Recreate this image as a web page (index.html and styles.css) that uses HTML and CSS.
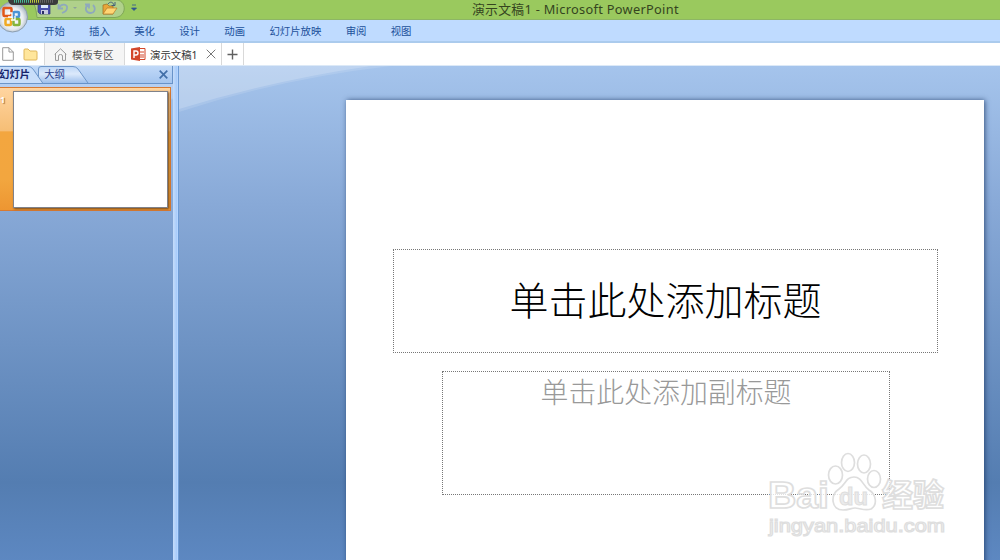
FILE: index.html
```html
<!DOCTYPE html>
<html lang="zh-CN">
<head>
  <meta charset="UTF-8" />
  <meta name="viewport" content="width=device-width, initial-scale=1.0" />
  <title>演示文稿1 - Microsoft PowerPoint</title>
  <link rel="stylesheet" href="styles.css">
</head>
<body>

  <!-- Title bar -->
  <header class="title-bar">
    <div class="quick-access">
      <svg class="quick-icons" width="100" height="19" viewBox="0 0 100 19">
        <path d="M0 0H85C95 1 95 17 83 17.500H5Q4 6 0 0Z" fill="#b0d18b" stroke="#7fa757" />
        <!-- save -->
        <path d="M6 2H18V14H8L6 12Z" fill="#4950ac" stroke="#353985" stroke-width=".7" />
        <path d="M9 3H16V8H9Z" fill="#dce8fa" />
        <path d="M9 10H16V14H9Z" fill="#c9cce0" />
        <path d="M10 11H12V14H10Z" fill="#292d65" />
        <!-- undo / redo -->
        <path d="M26.500 4V8.500H31M27 8C29 3 36 4 35 8C35 10 33 12 30 13" fill="none" stroke="#8fa9bc" stroke-width="1.8" />
        <path d="M41 7H45L43 9Z" fill="#8da19b" />
        <path d="M56 5C52 8 54 13 58.500 13C63 13 64 8 61 5M53 4.500H57V8.500" fill="none" stroke="#8fa9bc" stroke-width="1.8" />
        <!-- open -->
        <path d="M71 5L75 4L77 6H81V14H71Z" fill="#e8a63a" stroke="#9d6c21" stroke-width=".7" />
        <path d="M71 14L75 8H85L81 14Z" fill="#ffd574" stroke="#b47a25" stroke-width=".7" />
        <path d="M76 4C78 1 81 2 82 5M83 2V5.500H79.500" fill="none" stroke="#44607a" />
      </svg>
      <svg class="quick-more" width="6" height="8" viewBox="0 0 6 8"><path d="M1 1H5M.5 4H5.5L3 6.500Z" fill="#305790" stroke="#305790" stroke-width=".8" /></svg>
    </div>
    <h1 class="window-title">演示文稿1 - Microsoft PowerPoint</h1>
    <svg class="office-button" width="62" height="34" viewBox="0 0 62 34">
      <defs>
        <radialGradient id="orb" cx=".5" cy=".55" r=".5">
          <stop offset="0" stop-color="#fff" />
          <stop offset=".7" stop-color="#e9edf1" />
          <stop offset="1" stop-color="#b0bcc7" />
        </radialGradient>
      </defs>
      <circle cx="12.5" cy="17" r="15" fill="url(#orb)" stroke="#8b9daf" />
      <g fill="none" stroke-width="2.5">
        <rect x="3.5" y="8" width="8" height="8" rx="1" stroke="#e25819" />
        <rect x="13.5" y="12" width="5.5" height="5" rx="1" stroke="#4b94d6" />
        <rect x="5.5" y="19" width="5.5" height="6" rx="1" stroke="#f0aa24" />
        <rect x="13.5" y="19" width="6" height="6" rx="1" stroke="#85b43b" />
      </g>
      <path d="M8 13H12V17H8M15 16V20H11" fill="none" stroke="#fff" stroke-width="1.3" />
      <path d="M8 0H58V2Q58 5 54 5H13Q9 5 8 0Z" fill="#3a3b3c" />
      <path d="M14 1.2H31" stroke="#48bb95" stroke-width="3" stroke-dasharray="1 1" />
      <path d="M30 1.2H40" stroke="#b8c83c" stroke-width="3" stroke-dasharray="1 1" />
      <path d="M40 1.2H53" stroke="#666" stroke-width="3" stroke-dasharray="1 1" />
    </svg>
  </header>

  <nav class="menu">
    <span>开始</span>
    <span>插入</span>
    <span>美化</span>
    <span>设计</span>
    <span>动画</span>
    <span>幻灯片放映</span>
    <span>审阅</span>
    <span>视图</span>
  </nav>

  <!-- Document tabs -->
  <div class="doc-tabs">
    <div class="doc-tools">
      <svg width="12" height="14" viewBox="0 0 12 14"><path d="M.7 .7H7L11.3 5V13.3H.7ZM7 .7V5H11.3" fill="#fff" stroke="#999" /></svg>
      <svg width="15" height="13" viewBox="0 0 15 13"><path d="M1 2Q1 1 2 1H5L7 3H13Q14 3 14 4V11Q14 12 13 12H2Q1 12 1 11Z" fill="#ffe69c" stroke="#dfb65a" /></svg>
    </div>
    <div class="doc-tab doc-tab--template">
      <svg width="13" height="13" viewBox="0 0 13 13"><path d="M.7 6.3L6.5 .8L12.3 6.3M1.5 6V12.4H4.5V8Q4.5 6.5 6.5 6.5T8.5 8V12.4H11.5V6" fill="none" stroke="#999" /></svg>
      <span>模板专区</span>
    </div>
    <div class="doc-tab doc-tab--active">
      <svg width="15" height="14" viewBox="0 0 15 14">
        <path d="M7 1.5H14V12.5H7Z" fill="#fff" stroke="#d3472b" />
        <path d="M9 5H13M9 8H13M9 10H13" stroke="#d3472b" />
        <path d="M0 1.5L9 0V14L0 12.5Z" fill="#d3472b" />
        <path d="M3 11V4H5Q7 4 7 6T5 8H3" fill="none" stroke="#fff" stroke-width="1.4" />
      </svg>
      <span>演示文稿1</span>
      <svg class="tab-close" width="10" height="10" viewBox="0 0 10 10"><path d="M.7 .7L9.3 9.3M9.3 .7L.7 9.3" stroke="#777" /></svg>
    </div>
    <div class="doc-add">
      <svg width="11" height="11" viewBox="0 0 11 11"><path d="M5.5 .5V10.5M.5 5.5H10.5" stroke="#606060" stroke-width="1.4" /></svg>
    </div>
  </div>

  <main class="workspace">
    <aside class="slides-pane">
      <div class="pane-tabs">
        <svg class="pane-tabs--shape" width="92" height="18" viewBox="0 0 92 18">
          <defs>
            <linearGradient id="tabFill" x2="0" y2="1">
              <stop offset="0" stop-color="#bdd6f6" />
              <stop offset=".45" stop-color="#dce9fb" />
              <stop offset="1" stop-color="#9cbfec" />
            </linearGradient>
          </defs>
          <path d="M38.5 17V3Q38.5 .5 41 .5H73Q76 .5 78 3L88 17" fill="url(#tabFill)" stroke="#6d96c9" />
          <path d="M-1 .5H28Q31 .5 33 3L43 17.5H-1Z" fill="#c8defa" stroke="#6d96c9" />
        </svg>
        <span class="pane-tab pane-tab--active">幻灯片</span>
        <span class="pane-tab">大纲</span>
        <svg class="pane-close" width="9" height="9" viewBox="0 0 9 9"><path d="M.7 .7L8.3 8.3M8.3 .7L.7 8.3" stroke="#426fa8" stroke-width="1.7" /></svg>
      </div>
      <div class="thumb">
        <span class="thumb--number">1</span>
        <div class="thumb--slide"></div>
      </div>
    </aside>
    <div class="splitter"></div>

    <section class="editor">
      <svg class="editor--shine" width="260" height="48" viewBox="0 0 260 48">
        <path d="M0 0H212Q100 13 0 46Z" fill="#fff" fill-opacity=".12" />
        <path d="M0 0H192Q95 14 0 43Z" fill="#fff" fill-opacity=".18" />
      </svg>
      <div class="slide">
        <div class="placeholder placeholder--title">单击此处添加标题</div>
        <div class="placeholder placeholder--subtitle">单击此处添加副标题</div>

        <svg class="watermark" width="190" height="96" viewBox="0 0 190 96">
          <g class="watermark--outline">
            <text x="6" y="59" font-size="37" textLength="61" lengthAdjust="spacingAndGlyphs">Bai</text>
            <path d="M92 28C84 28 84 35 77 40C68 46 69 61 81 61C87 61 89 59 93 59S103 62 109 60C116 56 114 45 107 41C101 37 100 28 92 28Z" />
            <ellipse cx="73.500" cy="26" rx="7" ry="9" />
            <ellipse cx="86" cy="13.500" rx="6.500" ry="9" />
            <ellipse cx="102" cy="15" rx="6.500" ry="9" />
            <ellipse cx="112" cy="30" rx="6.500" ry="8.500" />
            <text class="watermark--du" x="77" y="56" font-size="24" textLength="29" lengthAdjust="spacingAndGlyphs">du</text>
            <text x="120" y="57" font-size="31" textLength="62" lengthAdjust="spacingAndGlyphs">经验</text>
            <text class="watermark--url" x="7" y="83" font-size="18" textLength="176" lengthAdjust="spacingAndGlyphs">jingyan.baidu.com</text>
          </g>
        </svg>
      </div>
    </section>
  </main>

</body>
</html>
```
FILE: styles.css
```css
* { box-sizing: border-box; margin: 0; padding: 0; }

body {
  width: 1000px;
  height: 560px;
  overflow: hidden;
  display: flex;
  flex-direction: column;
  font-family: "Noto Sans", "Noto Sans CJK SC", sans-serif;
  font-size: 10.4px;
  background: #fff;
}

svg { display: block; flex-shrink: 0; }

.title-bar {
  position: relative;
  height: 20px;
  flex-shrink: 0;
  background: #9ac95e;
  border-bottom: 1px solid #8db665;
}

.quick-access {
  display: flex;
  padding-left: 32px;
}

.quick-more {
  margin-top: 4px;
  margin-left: -1px;
}

.office-button {
  position: absolute;
  left: 0;
  top: 0;
  z-index: 2;
}

.window-title {
  padding-left: 472px;
  margin-top: -19px;
  line-height: 18px;
  font-size: 12.8px;
  letter-spacing: .3px;
  font-weight: 400;
  color: #35451f;
  white-space: nowrap;
}

.menu {
  height: 23px;
  flex-shrink: 0;
  display: flex;
  gap: 24.3px;
  padding-left: 44px;
  line-height: 22px;
  color: #21519b;
  font-family: "Noto Sans CJK SC", sans-serif;
  background: #bfdbff;
  border-bottom: 2px solid #abcbed;
}

.doc-tabs {
  height: 23px;
  flex-shrink: 0;
  display: flex;
  background: #fff;
  color: #555;
  border-bottom: 1px solid #dce9f7;
}

.doc-tools,
.doc-tab,
.doc-add {
  display: flex;
  align-items: center;
  border-right: 1px solid #d9d9d9;
}

.doc-tools {
  width: 45px;
  gap: 9px;
  padding-left: 2px;
}

.doc-tab--template {
  width: 80px;
  gap: 5px;
  padding-left: 9px;
  background: #f5f5f5;
}

.doc-tab--active {
  width: 97px;
  gap: 4px;
  padding-left: 6px;
  color: #333;
}

.tab-close {
  margin-left: 4px;
}

.doc-add {
  width: 22px;
  justify-content: center;
}

.workspace {
  flex: 1;
  display: flex;
  background: linear-gradient(#a5c4ec 0, #88a9d7 27%, #547db1 81%, #5e89c3 98%, #618dca 100%);
}

.slides-pane {
  width: 173px;
  background: linear-gradient(#b9d3f5 0, #b2ccf0 32px, transparent 34px);
}

.pane-tabs {
  position: relative;
  height: 18px;
  display: flex;
  align-items: center;
  color: #2b3f8d;
  background: linear-gradient(#c1d9f8, #a4c5ef);
  border-right: 1px solid #6893c9;
  border-bottom: 1px solid #6893c9;
}

.pane-tabs--shape {
  position: absolute;
  left: 0;
  top: 0;
}

.pane-tab {
  position: relative;
  margin-left: 14px;
  line-height: 17px;
}

.pane-tab--active {
  margin-left: -1px;
  font-weight: 700;
  color: #17256d;
}

.pane-close {
  margin-left: auto;
  margin-right: 4px;
}

.thumb {
  width: 171px;
  height: 124px;
  margin-top: 3px;
  display: flex;
  background: linear-gradient(#ffd5a0 0, #f6be76 35%, #f3a63f 36%, #f2a63f 75%, #ed9632 100%);
  border: 1px solid #d87a32;
  border-left: none;
}

.thumb--number {
  width: 13px;
  padding-top: 4px;
  font-size: 9px;
  font-weight: 700;
  line-height: 15px;
  color: #fff;
  text-shadow: 1px 1px 1px #a66e35;
}

.thumb--slide {
  width: 155px;
  height: 117px;
  margin-top: 3px;
  background: #fff;
  border: 1px solid #80828a;
  box-shadow: 1px 1px 2px #754718;
}

.splitter {
  width: 6px;
  background: linear-gradient(90deg, #c5dcfa 0, #a9ccfa 60%, #b5d5ff 75%, #6d9bd5 76%);
}

.editor {
  position: relative;
  flex: 1;
  padding: 34px 16px 0 167px;
  overflow: hidden;
}

.editor--shine {
  position: absolute;
  left: 0;
  top: 0;
}

.slide {
  position: relative;
  width: 638px;
  height: 480px;
  padding-top: 149px;
  background: #fff;
  box-shadow: 1px 0 5px rgba(25, 52, 96, .75);
}

.placeholder {
  border: 1px dotted #777;
  text-align: center;
  font-family: "Noto Sans CJK SC", sans-serif;
  font-weight: 300;
}

.placeholder--title {
  width: 545px;
  height: 104px;
  margin-left: 47px;
  font-size: 39px;
  line-height: 97px;
  color: #000;
}

.placeholder--subtitle {
  width: 448px;
  height: 124px;
  margin: 18px 0 0 96px;
  font-size: 27.9px;
  line-height: 38px;
  color: #999;
}

.watermark {
  position: absolute;
  left: 416px;
  top: 349px;
}

.watermark--outline {
  font-family: "Liberation Sans", "Noto Sans CJK SC", sans-serif;
  font-weight: 700;
  fill: #fff;
  fill-opacity: .8;
  stroke: #dedede;
  stroke-width: 1.7px;
}

.watermark--du {
  fill: #e6e6e6;
  stroke-width: 1px;
}

.watermark--url {
  font-family: "Liberation Sans", sans-serif;
  font-weight: 400;
  stroke-width: 1.2px;
}
```
